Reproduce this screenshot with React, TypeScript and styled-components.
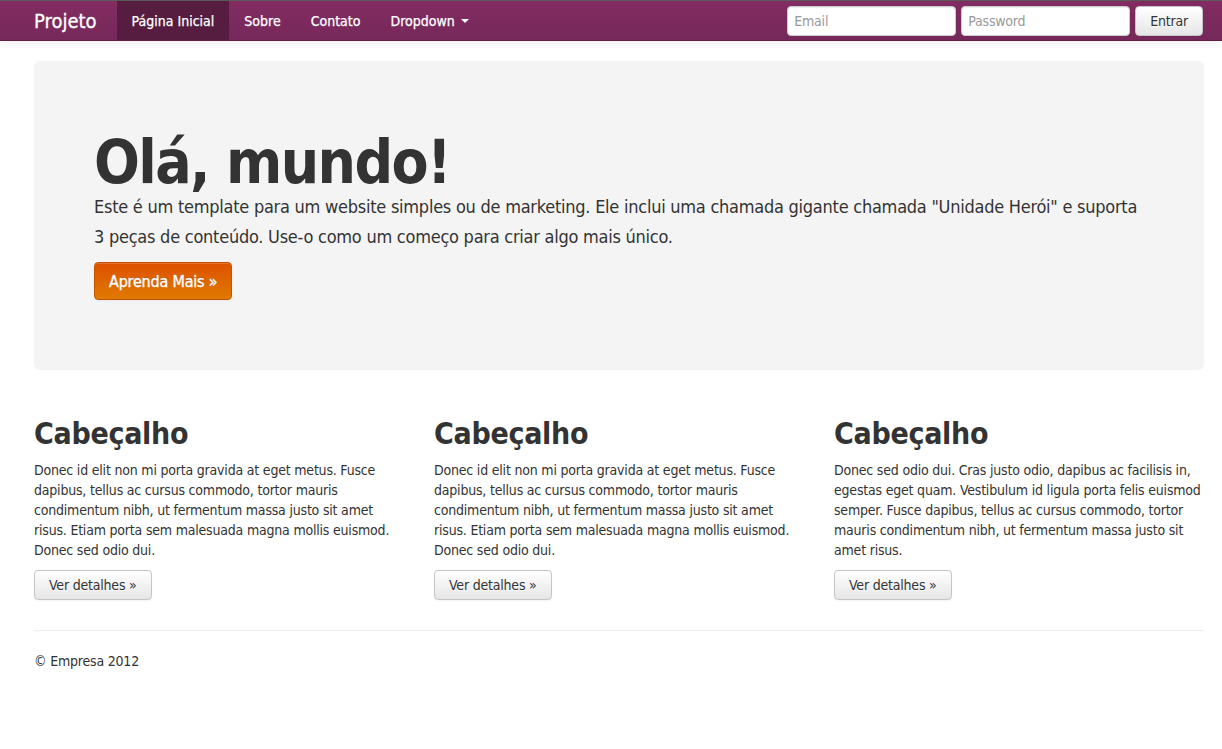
import React from "react";
import styled, { createGlobalStyle } from "styled-components";

const FONT = `"DejaVu Sans Condensed", "DejaVu Sans", Verdana, sans-serif`;

const Global = createGlobalStyle`
  html, body { margin: 0; padding: 0; background: #fff; }
  body { font-family: ${FONT}; font-size: 14px; line-height: 20px; color: #333; letter-spacing: -0.2px; }
  * { box-sizing: border-box; }
`;

const Navbar = styled.div`
  height: 41px;
  background: linear-gradient(#822c62, #76285a);
  border-top: 1px solid #5a5a5a;
  border-bottom: 1px solid #5e1f47;
  display: flex;
  align-items: stretch;
  padding: 0 19px 0 34px;
  box-shadow: 0 1px 8px rgba(0,0,0,0.08);
  letter-spacing: 0;
`;

const Brand = styled.a`
  color: #fff;
  font-size: 20px;
  display: flex;
  align-items: center;
  padding-right: 20px;
  text-decoration: none;
  -webkit-text-stroke: 0.3px #fff;
`;

const NavList = styled.ul`
  list-style: none;
  margin: 0;
  padding: 0;
  display: flex;
`;

const NavItem = styled.li<{ $active?: boolean }>`
  display: flex;
  align-items: center;
  padding: 0 15px;
  color: #fff;
  font-size: 14px;
  -webkit-text-stroke: 0.25px #fff;
  background: ${p => (p.$active ? "#561d40" : "transparent")};
`;

const Caret = styled.span`
  display: inline-block;
  width: 0;
  height: 0;
  margin-left: 6px;
  border-top: 4px solid #fff;
  border-left: 4px solid transparent;
  border-right: 4px solid transparent;
  vertical-align: middle;
`;

const NavForm = styled.form`
  margin-left: auto;
  display: flex;
  align-items: center;
  gap: 5px;
`;

const Input = styled.input`
  width: 169px;
  height: 30px;
  padding: 4px 6px;
  border: 1px solid #ccc;
  border-radius: 4px;
  font-family: ${FONT};
  font-size: 14px;
  letter-spacing: -0.2px;
  color: #555;
  background: #fff;
  box-shadow: inset 0 1px 1px rgba(0,0,0,0.075);
  &::placeholder { color: #999; }
`;

const Button = styled.button<{ $big?: boolean }>`
  font-family: ${FONT};
  font-size: ${p => (p.$big ? "16px" : "14px")};
  letter-spacing: -0.2px;
  height: ${p => (p.$big ? "38px" : "30px")};
  padding: 0 14px;
  color: ${p => (p.$big ? "#fff" : "#333")};
  border-radius: 4px;
  border: 1px solid ${p => (p.$big ? "#c25300" : "#c5c5c5")};
  background: ${p =>
    p.$big ? "linear-gradient(#df5000, #df7a00)" : "linear-gradient(#fff, #e6e6e6)"};
  box-shadow: inset 0 1px 0 rgba(255,255,255,0.2), 0 1px 2px rgba(0,0,0,0.05);
  cursor: pointer;
  -webkit-text-stroke: ${p => (p.$big ? "0.35px #fff" : "0")};
  text-shadow: ${p => (p.$big ? "0 -1px 0 rgba(0,0,0,0.25)" : "0 1px 1px rgba(255,255,255,0.75)")};
`;

const Container = styled.div`
  width: 1170px;
  margin-left: 34px;
  padding-top: 20px;
`;

const Hero = styled.div`
  background: #f4f4f4;
  border-radius: 6px;
  padding: 60px;
  min-height: 309px;
`;

const HeroTitle = styled.h1`
  margin: 0;
  font-size: 60px;
  line-height: 1;
  font-weight: bold;
  letter-spacing: -1.6px;
  color: #333;
  padding-top: 11px;
`;

const HeroText = styled.p`
  margin: 0 0 10px;
  font-size: 18px;
  line-height: 30px;
  letter-spacing: -0.25px;
  color: #333;
`;

const Row = styled.div`
  display: grid;
  grid-template-columns: repeat(3, 370px);
  column-gap: 30px;
  margin-top: 40px;
`;

const Col = styled.div``;

const ColTitle = styled.h2`
  margin: 0;
  font-size: 30px;
  line-height: 40px;
  font-weight: bold;
  letter-spacing: -0.3px;
  padding: 4px 0 6px;
`;

const ColText = styled.p`
  margin: 0 0 10px;
`;

const Rule = styled.hr`
  margin: 30px 0 20px;
  border: 0;
  border-top: 1px solid #eee;
`;

const Footer = styled.footer`
  p { margin: 0; }
`;

const cols = [
  "Donec id elit non mi porta gravida at eget metus. Fusce dapibus, tellus ac cursus commodo, tortor mauris condimentum nibh, ut fermentum massa justo sit amet risus. Etiam porta sem malesuada magna mollis euismod. Donec sed odio dui.",
  "Donec id elit non mi porta gravida at eget metus. Fusce dapibus, tellus ac cursus commodo, tortor mauris condimentum nibh, ut fermentum massa justo sit amet risus. Etiam porta sem malesuada magna mollis euismod. Donec sed odio dui.",
  "Donec sed odio dui. Cras justo odio, dapibus ac facilisis in, egestas eget quam. Vestibulum id ligula porta felis euismod semper. Fusce dapibus, tellus ac cursus commodo, tortor mauris condimentum nibh, ut fermentum massa justo sit amet risus.",
];

export default function App() {
  return (
    <>
      <Global />
      <Navbar>
        <Brand href="#">Projeto</Brand>
        <NavList>
          <NavItem $active>Página Inicial</NavItem>
          <NavItem>Sobre</NavItem>
          <NavItem>Contato</NavItem>
          <NavItem>
            Dropdown <Caret />
          </NavItem>
        </NavList>
        <NavForm onSubmit={e => e.preventDefault()}>
          <Input placeholder="Email" />
          <Input type="password" placeholder="Password" />
          <Button type="submit">Entrar</Button>
        </NavForm>
      </Navbar>
      <Container>
        <Hero>
          <HeroTitle>Olá, mundo!</HeroTitle>
          <HeroText>
            Este é um template para um website simples ou de marketing. Ele inclui uma chamada gigante chamada "Unidade Herói" e suporta 3 peças de conteúdo. Use-o como um começo para criar algo mais único.
          </HeroText>
          <Button $big>Aprenda Mais »</Button>
        </Hero>
        <Row>
          {cols.map((t, i) => (
            <Col key={i}>
              <ColTitle>Cabeçalho</ColTitle>
              <ColText>{t}</ColText>
              <Button>Ver detalhes »</Button>
            </Col>
          ))}
        </Row>
        <Rule />
        <Footer>
          <p>© Empresa 2012</p>
        </Footer>
      </Container>
    </>
  );
}
